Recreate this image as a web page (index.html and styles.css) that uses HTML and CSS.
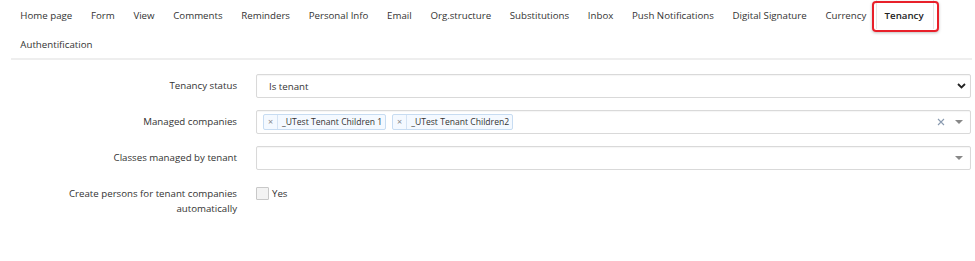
FILE: index.html
```html
<!DOCTYPE html>
<html>
<head>
<meta charset="utf-8">
<link rel="stylesheet" href="styles.css">
</head>
<body>
<div class="page">
  <nav class="tabs">
    <a class="tab">Home page</a>
    <a class="tab">Form</a>
    <a class="tab">View</a>
    <a class="tab">Comments</a>
    <a class="tab">Reminders</a>
    <a class="tab">Personal Info</a>
    <a class="tab">Email</a>
    <a class="tab">Org.structure</a>
    <a class="tab">Substitutions</a>
    <a class="tab">Inbox</a>
    <a class="tab">Push Notifications</a>
    <a class="tab">Digital Signature</a>
    <a class="tab">Currency</a>
    <a class="tab active">Tenancy<span class="highlight"></span></a>
    <a class="tab">Authentification</a>
  </nav>
  <div class="form">
    <div class="label">Tenancy status</div>
    <div class="field select">
      <span class="value">Is tenant</span>
      <svg class="chevron" width="9" height="6" viewBox="0 0 9 6"><path d="M1 1 L4.5 4.5 L8 1" fill="none" stroke="#222" stroke-width="1.8"/></svg>
    </div>

    <div class="label">Managed companies</div>
    <div class="field multi">
      <span class="tag"><span class="tag-x">×</span><span class="tag-text">_UTest Tenant Children 1</span></span>
      <span class="tag"><span class="tag-x">×</span><span class="tag-text">_UTest Tenant Children2</span></span>
      <span class="spacer"></span>
      <svg class="clear" width="8" height="8" viewBox="0 0 8 8"><path d="M1 1 L7 7 M7 1 L1 7" stroke="#8a9bb0" stroke-width="1.1"/></svg>
      <span class="caret"></span>
    </div>

    <div class="label">Classes managed by tenant</div>
    <div class="field multi">
      <span class="spacer"></span>
      <span class="caret"></span>
    </div>

    <div class="label two-line">Create persons for tenant companies automatically</div>
    <label class="check">
      <span class="box"></span>
      <span>Yes</span>
    </label>
  </div>
</div>
</body>
</html>
```
FILE: styles.css
```css
* { box-sizing: border-box; }
body {
  margin: 0;
  background: #fff;
  font-family: "Open Sans", "Noto Sans", sans-serif;
  font-size: 9.7px;
  color: #333;
}
.page {
  padding: 0 3px 0 11px;
}
.tabs {
  display: flex;
  flex-wrap: wrap;
  padding-left: 0;
  border-bottom: 2px solid #eeeeee;
}
.tab {
  position: relative;
  display: block;
  padding: 0 9.35px;
  height: 29px;
  line-height: 32px;
  color: #333;
  white-space: nowrap;
}
.tab.active {
  font-weight: 600;
  color: #222;
  border-left: 1px solid #e6e6e6;
  border-right: 1px solid #e6e6e6;
  padding: 0 9px 0 8px;
}
.highlight {
  position: absolute;
  left: -5px;
  right: -6px;
  top: 1px;
  height: 31px;
  border: 2px solid #e8202a;
  border-radius: 4px;
  box-shadow: 0 1px 3px rgba(0,0,0,0.25);
  pointer-events: none;
}
.form {
  display: grid;
  grid-template-columns: 226px 1fr;
  column-gap: 19px;
  row-gap: 12px;
  padding-top: 14px;
  padding-right: 1px;
  align-items: start;
}
.label {
  text-align: right;
  line-height: 24px;
  color: #333;
}
.label.two-line {
  line-height: 15px;
  padding-top: 4px;
  padding-left: 45px;
}
.field {
  height: 24px;
  border: 1px solid #d9d9d9;
  border-radius: 2px;
  box-shadow: inset 0 1px 1px rgba(0,0,0,0.04);
  display: flex;
  align-items: center;
  background: #fff;
}
.select {
  padding: 0 4px 0 12px;
  justify-content: space-between;
}
.multi {
  padding: 0 7px 0 6px;
  gap: 6px;
}
.tag {
  display: flex;
  align-items: center;
  height: 16px;
  border: 1px solid #c7dcf2;
  background: #f4f9ff;
  border-radius: 2px;
  font-size: 8.6px;
  color: #333;
}
.tag-x {
  width: 14px;
  text-align: center;
  color: #888;
  font-size: 9px;
  border-right: 1px solid #d4e3f4;
  line-height: 14px;
}
.tag-text {
  padding: 0 3px 0 4px;
  line-height: 14px;
}
.spacer { flex: 1; }
.clear { margin-right: 4px; }
.caret {
  width: 0;
  height: 0;
  border-left: 4px solid transparent;
  border-right: 4px solid transparent;
  border-top: 4px solid #888;
}
.check {
  display: flex;
  align-items: center;
  gap: 3px;
  padding-top: 5px;
  color: #333;
}
.box {
  width: 13px;
  height: 13px;
  border: 1px solid #c8c8c8;
  background: #f3f3f3;
  border-radius: 1px;
}
```
